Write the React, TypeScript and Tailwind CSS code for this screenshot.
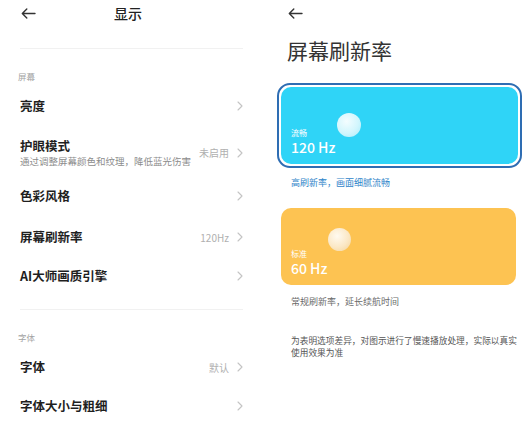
import { ReactNode } from "react"

const font = { fontFamily: '"Noto Sans CJK SC", "Noto Sans", sans-serif' }

function BackArrow() {
  return (
    <svg width="15" height="11" viewBox="0 0 15 11" fill="none">
      <path d="M14 5.5H1.5M5.8 1L1.3 5.5L5.8 10" stroke="#333" strokeWidth="1.4" strokeLinecap="round" strokeLinejoin="round" />
    </svg>
  )
}

function Chevron() {
  return (
    <svg width="6" height="10" viewBox="0 0 6 10" fill="none">
      <path d="M1 1L5 5L1 9" stroke="#c4c4c4" strokeWidth="1.1" strokeLinecap="round" strokeLinejoin="round" />
    </svg>
  )
}

function Row({ h, title, sub, value }: { h: string; title: string; sub?: string; value?: string }) {
  return (
    <div className={`flex items-center justify-between ${h}`}>
      <div className="flex flex-col">
        <span className="text-[12.5px] leading-[16px] font-semibold text-[#1f1f1f]">{title}</span>
        {sub && <span className="mt-[1px] text-[9.5px] leading-[13px] text-[#8c8c8c] whitespace-nowrap">{sub}</span>}
      </div>
      <div className="flex items-center gap-[8px]">
        {value && <span className="text-[10px] text-[#b0b0b0]">{value}</span>}
        <Chevron />
      </div>
    </div>
  )
}

function SectionLabel({ children, mt }: { children: ReactNode; mt: string }) {
  return <div className={`${mt} h-[12px] text-[8.5px] leading-[12px] text-[#a3a3a3] -ml-[2px]`}>{children}</div>
}

function DisplayScreen() {
  return (
    <div className="w-[265px] shrink-0 bg-white">
      <div className="relative flex items-center h-[26px] pl-[21px]">
        <BackArrow />
        <span className="absolute left-[114px] top-[4px] text-[14px] leading-[18px] font-medium text-[#222]">显示</span>
      </div>
      <div className="pl-[20px] pr-[22px]">
        <div className="mt-[22px] h-px bg-[#f1f1f1]" />
        <SectionLabel mt="mt-[21px]">屏幕</SectionLabel>
        <Row h="h-[48px]" title="亮度" />
        <Row h="h-[45px]" title="护眼模式" sub="通过调整屏幕颜色和纹理，降低蓝光伤害" value="未启用" />
        <Row h="h-[42px]" title="色彩风格" />
        <Row h="h-[40px]" title="屏幕刷新率" value="120Hz" />
        <Row h="h-[38px]" title="AI大师画质引擎" />
        <div className="mt-[14px] h-px bg-[#f1f1f1]" />
        <SectionLabel mt="mt-[21px]">字体</SectionLabel>
        <Row h="h-[48px]" title="字体" value="默认" />
        <Row h="h-[30px]" title="字体大小与粗细" />
      </div>
    </div>
  )
}

function RateScreen() {
  return (
    <div className="flex-1 bg-white">
      <div className="flex items-center h-[26px] pl-[23px]">
        <BackArrow />
      </div>
      <div className="mt-[10px] pl-[22px] text-[21px] leading-[28px] text-[#333]">屏幕刷新率</div>

      {/* 120Hz selected */}
      <div className="mt-[19px] ml-[12px] mr-[7px] h-[85px] rounded-[13px] border-2 border-[#2e6db3] p-[2px] bg-white">
        <div className="relative h-full rounded-[10px] bg-[#2fd4f7] flex flex-col justify-end pl-[10px] pb-[8px]">
          <div className="absolute left-[56px] top-[26px] w-[24px] h-[24px] rounded-full bg-[radial-gradient(circle_at_40%_35%,#f4fdff_0%,#d2f6fd_55%,#a6ebfa_100%)]" />
          <span className="text-[8px] leading-[10px] text-white">流畅</span>
          <span className="mt-[1px] text-[14px] leading-[17px] font-medium text-white">120 Hz</span>
        </div>
      </div>
      <div className="mt-[9px] pl-[26px] text-[9px] leading-[12px] text-[#2f84c9]">高刷新率，画面细腻流畅</div>

      {/* 60Hz */}
      <div className="relative mt-[19px] ml-[16px] mr-[13px] h-[77px] rounded-[10px] bg-[#fdc352] flex flex-col justify-end pl-[10px] pb-[8px]">
        <div className="absolute left-[47px] top-[20px] w-[23px] h-[23px] rounded-full bg-[radial-gradient(circle_at_40%_35%,#fffaf0_0%,#fbe8c6_55%,#f3d297_100%)]" />
        <span className="text-[8px] leading-[10px] text-white">标准</span>
        <span className="mt-[1px] text-[14px] leading-[17px] font-medium text-white">60 Hz</span>
      </div>
      <div className="mt-[11px] pl-[26px] text-[9px] leading-[12px] text-[#6b6b6b]">常规刷新率，延长续航时间</div>

      <div className="mt-[27px] pl-[26px] text-[8.7px] leading-[11.5px] text-[#555]">
        <div className="whitespace-nowrap">为表明选项差异，对图示进行了慢速播放处理，实际以真实</div>
        <div className="whitespace-nowrap">使用效果为准</div>
      </div>
    </div>
  )
}

export default function App() {
  return (
    <div className="flex w-[529px] h-[434px] overflow-hidden bg-white" style={font}>
      <DisplayScreen />
      <RateScreen />
    </div>
  )
}
